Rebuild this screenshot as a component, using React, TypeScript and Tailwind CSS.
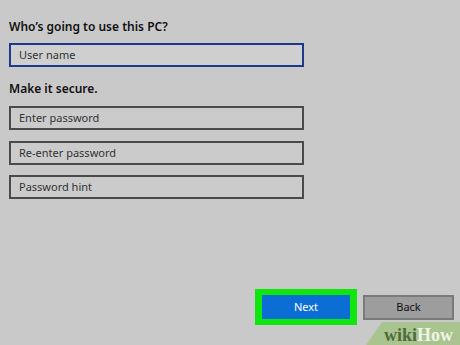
import React from "react";

export default function App() {
  return (
    <div
      className="relative w-[460px] h-[345px] overflow-hidden bg-[#c9c9c9]"
      style={{ fontFamily: '"Noto Sans", "Open Sans", sans-serif' }}
    >
      <div className="flex flex-col pl-[9px] pt-[19px]">
        <div className="text-[12px] leading-[16px] font-semibold text-[#111]">Who’s going to use this PC?</div>
        <div className="mt-[8px] w-[295px] h-[24px] border-2 border-[#1d3a8a] bg-[#cfcfcf] flex items-center pl-[8px] text-[11px] text-[#333]">
          User name
        </div>
        <div className="mt-[14px] text-[12px] leading-[16px] font-semibold text-[#111]">Make it secure.</div>
        <div className="mt-[9px] w-[295px] h-[24px] border-2 border-[#4a4a4a] bg-[#cbcbcb] flex items-center pl-[8px] text-[11px] text-[#333]">
          Enter password
        </div>
        <div className="mt-[11px] w-[295px] h-[24px] border-2 border-[#4a4a4a] bg-[#cbcbcb] flex items-center pl-[8px] text-[11px] text-[#333]">
          Re-enter password
        </div>
        <div className="mt-[10px] w-[295px] h-[24px] border-2 border-[#4a4a4a] bg-[#cbcbcb] flex items-center pl-[8px] text-[11px] text-[#333]">
          Password hint
        </div>
      </div>
      <div className="mt-[90px] flex justify-end items-center pr-[6px] gap-[6px]">
        <div className="w-[102px] h-[36px] bg-[#0ee60e] p-[6px_7px]">
          <div className="w-full h-full bg-[#0a6ed4] flex items-center justify-center text-[11px] text-white">Next</div>
        </div>
        <div className="w-[91px] h-[25px] bg-[#9d9d9d] border-2 border-[#7a7a7a] flex items-center justify-center text-[11px] text-[#111]">
          Back
        </div>
      </div>
      <svg className="absolute left-0 top-0" width="460" height="345" viewBox="0 0 460 345">
        <polygon points="366,345 382,322 460,322 460,345" fill="#a9c48e" />
        <text x="384" y="341" fontFamily="'Liberation Serif', 'DejaVu Serif', serif" fontWeight="bold" fontSize="18" fill="#4e6b3c">
          wiki<tspan fill="#eef5e8">How</tspan>
        </text>
      </svg>
    </div>
  );
}
